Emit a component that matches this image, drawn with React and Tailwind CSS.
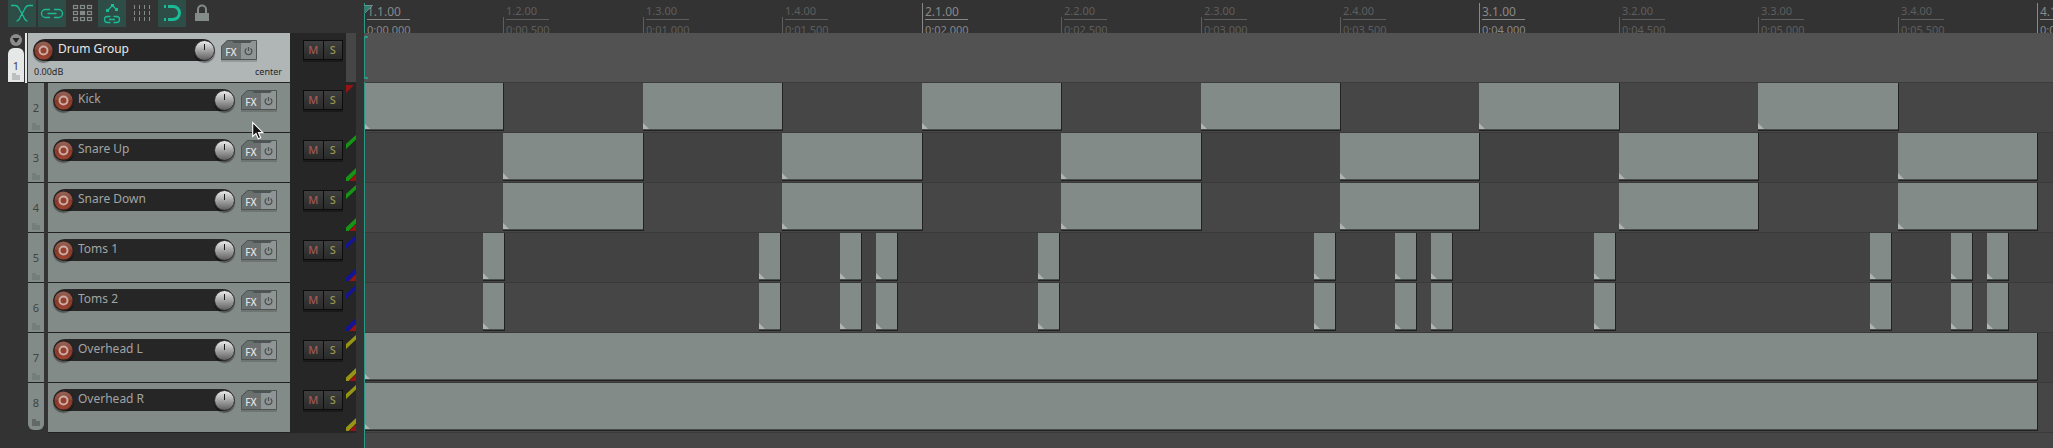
import React, { useState } from 'react';

const BEAT_WIDTH = 139.42;
const TOM_HITS = [119, 395, 476, 512, 674, 950, 1031, 1067, 1230, 1506, 1587, 1623];

const beatX = beat => Math.round(beat * BEAT_WIDTH);

function beats(list, length = 1) {
  return list.map(b => ({ left: beatX(b), width: beatX(b + length) - beatX(b) + 1 }));
}

const kicks = beats([0, 2, 4, 6, 8, 10]);
const snares = beats([1, 3, 5, 7, 9, 11]);
const toms = TOM_HITS.map(x => ({ left: x, width: 22 }));
const overheads = beats([0], 12);

const tracks = [
  { id: 2, name: 'Kick', routing: null, clips: kicks },
  { id: 3, name: 'Snare Up', routing: '#149614', clips: snares },
  { id: 4, name: 'Snare Down', routing: '#149614', clips: snares },
  { id: 5, name: 'Toms 1', routing: '#141496', clips: toms },
  { id: 6, name: 'Toms 2', routing: '#141496', clips: toms },
  { id: 7, name: 'Overhead L', routing: '#969614', clips: overheads },
  { id: 8, name: 'Overhead R', routing: '#969614', clips: overheads },
];

const marks = [
  ['1.1.00', '0:00.000'],
  ['1.2.00', '0:00.500'],
  ['1.3.00', '0:01.000'],
  ['1.4.00', '0:01.500'],
  ['2.1.00', '0:02.000'],
  ['2.2.00', '0:02.500'],
  ['2.3.00', '0:03.000'],
  ['2.4.00', '0:03.500'],
  ['3.1.00', '0:04.000'],
  ['3.2.00', '0:04.500'],
  ['3.3.00', '0:05.000'],
  ['3.4.00', '0:05.500'],
  ['4.1.00', '0:06.000'],
];

const gridCells = [5.5, 11.5, 17.5].flatMap(y => [5.5, 12.5, 19.5].map(x => [x, y]));

const tools = [
  {
    label: 'Auto crossfade',
    on: true,
    icon: <path d="M3 5.500h4c2.500 0 3.500 1.500 4.500 4l4 7c1 2.500 2 4.500 4 4.500M25 5.500h-4c-2.500 0-3.500 1.500-4.500 4l-4 7c-1 2.500-2 4.500-4 4.500" />,
  },
  {
    label: 'Item grouping',
    on: true,
    icon: <path d="M12 9.500H7.500a4 4 0 0 0 0 8H12M16 9.500h4.500a4 4 0 0 1 0 8H16M9.500 13.500h9" />,
  },
  {
    label: 'Ripple editing',
    icon: (
      <g strokeWidth="1.2">
        {gridCells.map(([x, y]) => (
          <rect key={`${x}-${y}`} x={x} y={y} width="4" height="3" fill={x === 12.5 && y === 11.5 ? 'currentColor' : 'none'} />
        ))}
      </g>
    ),
  },
  {
    label: 'Move envelopes',
    on: true,
    icon: (
      <>
        <path d="M12.500 16.500h-3a3 3 0 0 0 0 6h3M15.500 16.500h3a3 3 0 0 1 0 6h-3M11 19.500h6M9.500 10.500l5-5 4 4" />
        <path d="M8 9h3v3H8zM13 4h3v3h-3zM17 8h3v3h-3z" fill="currentColor" stroke="none" />
      </>
    ),
  },
  {
    label: 'Grid lines',
    icon: <path strokeWidth="1" strokeDasharray="4 2" d="M6.500 5v16M11.500 5v16M16.500 5v16M21.500 5v16" />,
  },
  {
    label: 'Snap',
    on: true,
    icon: (
      <>
        <path strokeWidth="3" d="M10 6.500h5a6.500 6.500 0 0 1 0 13h-5" />
        <path d="M6 5h2v3H6zM6 18h2v3H6z" fill="currentColor" stroke="none" />
      </>
    ),
  },
  {
    label: 'Lock',
    icon: (
      <>
        <path strokeWidth="2" d="M10 14V9.500a4 4 0 0 1 8 0V14" />
        <path d="M7 13h14v8H7z" fill="currentColor" stroke="none" />
      </>
    ),
  },
];

function Toolbar() {
  return (
    <div className="flex h-[33px] items-start gap-0.5 pl-2">
      {tools.map(tool => (
        <button
          key={tool.label}
          type="button"
          aria-label={tool.label}
          className={'h-[27px] w-7 ' + (tool.on ? 'bg-[#2f4d47] text-[#1abc98]' : 'text-[#848c8a]')}
        >
          <svg viewBox="0 0 28 27" className="block h-[27px] w-7" fill="none" stroke="currentColor" strokeWidth="1.3">
            {tool.icon}
          </svg>
        </button>
      ))}
    </div>
  );
}

function FolderIcon({ className }) {
  return (
    <svg viewBox="0 0 8 7" className={'h-[7px] w-2 ' + className} fill="currentColor">
      <path d="M0 0h4v2h4v5H0z" />
    </svg>
  );
}

function RecordButton({ name }) {
  return (
    <button type="button" aria-label={`Arm ${name}`} className="-ml-px size-[21px] shrink-0 rounded-full shadow-[0_2px_1px_#0006]">
      <svg viewBox="0 0 21 21" className="block size-[21px]">
        <defs>
          <linearGradient id="arm" x1="0" y1="0" x2="0" y2="1">
            <stop offset="0" stopColor="#96655a" />
            <stop offset="0.45" stopColor="#8c4a3a" />
            <stop offset="0.5" stopColor="#86382a" />
            <stop offset="1" stopColor="#a04632" />
          </linearGradient>
        </defs>
        <circle cx="10.500" cy="10.500" r="9.800" fill="url(#arm)" stroke="#2a2220" strokeWidth="1.400" />
        <circle cx="10.500" cy="10.500" r="4" fill="#94402f" stroke="#cfaca4" strokeWidth="2" />
      </svg>
    </button>
  );
}

function VolumeKnob({ name }) {
  return (
    <label className="relative -mr-px block size-[21px] shrink-0 rounded-full shadow-[0_2px_1px_#0006]">
      <input type="range" aria-label={`${name} volume`} className="absolute inset-0 size-full opacity-0" />
      <svg viewBox="0 0 21 21" className="block size-[21px]">
        <defs>
          <linearGradient id="knob" x1="0" y1="0" x2="0" y2="1">
            <stop offset="0" stopColor="#f0f0f0" />
            <stop offset="0.5" stopColor="#a4a4a4" />
            <stop offset="1" stopColor="#5c5c5c" />
          </linearGradient>
        </defs>
        <circle cx="10.500" cy="10.500" r="10" fill="url(#knob)" stroke="#262626" />
        <path d="M10.500 4v6" stroke="#1c1c1c" />
      </svg>
    </label>
  );
}

function FxButtons({ name }) {
  return (
    <div className="relative ml-[7px] flex h-5 w-9 shrink-0 shadow-[0_2px_0_#0000002a] [clip-path:polygon(0_6px,6px_0,100%_0,100%_110%,0_110%)]">
      <button type="button" aria-label={`${name} effects`} className="w-5 bg-[#6a706f] pt-0.5 text-[10px] leading-5 font-medium text-[#e4e4e4]">
        FX
      </button>
      <button type="button" aria-label={`Bypass ${name} effects`} className="w-4 bg-[#8e9594] text-[#4c5250]">
        <svg viewBox="0 0 16 20" className="block h-5 w-4" fill="none" stroke="currentColor" strokeWidth="1.300">
          <path d="M5.500 8.500a3.400 3.400 0 1 0 4 0M7.500 7v4" />
        </svg>
      </button>
      <svg viewBox="0 0 36 20" className="pointer-events-none absolute inset-0 h-5 w-9" fill="none" stroke="#4e5453">
        <path d="M.5 19.500V6.500l6-6h29v19z" />
        <path d="M11 1h20l-2 2H13z" fill="#4e5453" stroke="none" />
      </svg>
    </div>
  );
}

function MuteSolo({ name }) {
  return (
    <div className="mt-[7px] ml-[13px] flex h-5 w-10 divide-x divide-[#0c0c0c] border border-[#0c0c0c] bg-linear-to-b from-[#3e3e3e] to-[#2a2a2a] text-[11px] leading-[18px] font-medium shadow-[0_2px_0_#1a1a1a]">
      <button type="button" aria-label={`Mute ${name}`} className="flex-1 text-[#a25a52]">M</button>
      <button type="button" aria-label={`Solo ${name}`} className="flex-1 text-[#97954e]">S</button>
    </div>
  );
}

function Meter({ folder, routing }) {
  if (folder) {
    return <div className="ml-auto h-[49px] w-2.5 bg-[#464646]" />;
  }
  return (
    <svg viewBox="0 0 10 50" className="ml-auto h-[50px] w-2.5">
      {routing ? (
        <>
          <path d="M0 11l10-9v4.500L0 16zM0 44.500L10 35v5.500L2.500 48H0z" fill={routing} />
          <path d="M3 48l7-7v7z" fill="#961414" />
        </>
      ) : (
        <path d="M0 2h8l-8 8z" fill="#961414" />
      )}
    </svg>
  );
}

function TrackPanel({ name, folder, routing }) {
  return (
    <>
      <div className={'min-w-0 flex-1 border-b border-[#222] pt-1.5 ' + (folder ? 'bg-[#b0b6b6]' : 'bg-[#838b89]')}>
        <div className="flex items-center pl-1.5">
          <div className="flex h-[22px] w-[180px] items-center justify-between rounded-full bg-[#262626]">
            <RecordButton name={name} />
            <input
              type="text"
              aria-label="Track name"
              defaultValue={name}
              className={'h-5 min-w-0 flex-1 bg-transparent px-1 pb-0.5 text-[12px] leading-5 outline-none ' + (folder ? 'text-[#e8e8e8]' : 'text-[#a2a4a4]')}
            />
            <VolumeKnob name={name} />
          </div>
          <FxButtons name={name} />
        </div>
        {folder && (
          <div className="flex justify-between pt-[5px] pr-2 pl-1.5 text-[9px] leading-3 text-[#262626]">
            <span>0.00dB</span>
            <span>center</span>
          </div>
        )}
      </div>
      <div className="flex h-[50px] w-[66px] shrink-0 bg-[#262626]">
        <MuteSolo name={name} />
        <Meter folder={folder} routing={routing} />
      </div>
    </>
  );
}

function FolderTrack() {
  const [open, setOpen] = useState(true);

  return (
    <div className="flex h-[50px] pl-2">
      <div className="flex w-4 flex-col items-center">
        <button type="button" aria-label="Collapse folder" aria-expanded={open} onClick={() => setOpen(!open)} className="mt-px">
          <svg viewBox="0 0 12 12" className="block size-3">
            <circle cx="6" cy="6" r="6" fill="#8c8c8c" />
            <path d="M2.500 4h7L6 9z" fill="#262626" />
          </svg>
        </button>
        <div className="mt-0.5 flex w-full flex-1 flex-col items-center justify-end rounded-t-md border-b border-[#222] bg-[#e6e8e8] pb-0.5 text-[11px] leading-[15px] text-[#444]">
          1
          <FolderIcon className="text-[#bcc0c0]" />
        </div>
      </div>
      <div className="mr-px ml-px w-0.5 bg-[#e6e8e8]" />
      <TrackPanel name="Drum Group" folder />
    </div>
  );
}

function Track({ track, last }) {
  return (
    <div className="flex h-[50px] pl-7">
      <div
        className={
          'mr-1 flex w-4 shrink-0 flex-col items-center justify-end bg-[#838b89] text-[11px] leading-4 text-[#3e4442] ' +
          (last ? 'mb-[3px] gap-2 rounded-b-md pb-1' : 'gap-[7px] border-b border-[#222] pb-0.5')
        }
      >
        {track.id}
        <FolderIcon className={last ? 'text-[#636967]' : 'text-[#767e7c]'} />
      </div>
      <TrackPanel name={track.name} routing={track.routing} />
    </div>
  );
}

function Ruler() {
  return (
    <div className="relative h-[33px] overflow-hidden">
      {marks.map(([bar, time], i) => {
        const major = i % 4 === 0;
        return (
          <div
            key={bar}
            style={{ left: beatX(i) }}
            className={'absolute top-0 h-[33px] whitespace-nowrap pl-[3px] ' + (major ? 'text-[#888]' : 'text-[#5e5e5e]')}
          >
            <div className={'absolute bottom-0 left-0 w-px bg-current ' + (major ? 'top-[3px]' : 'top-[17px]')} />
            <div className={'h-5 w-[43px] border-b border-current ' + (major ? 'pt-1 text-[12px] leading-4' : 'pt-[3px] text-[11px] leading-4')}>{bar}</div>
            <div className="pt-0.5 text-[11px] leading-4">{time}</div>
          </div>
        );
      })}
    </div>
  );
}

function Clip({ clip }) {
  return (
    <div
      style={{ left: clip.left, width: clip.width }}
      className="absolute top-0 h-12 border-r border-b border-[#222] bg-[#838b89]"
    >
      <div className="flex h-full items-end border-b border-[#484e4c]">
        <svg viewBox="0 0 6 6" className="block size-1.5">
          <path d="M0 0l6 6H0z" fill="#b0b4b4" />
        </svg>
      </div>
    </div>
  );
}

function Timeline() {
  return (
    <div className="relative flex min-w-0 flex-1 flex-col overflow-hidden">
      <Ruler />
      <div className="h-[50px] border-b border-[#3c3c3c] bg-[#525252]" />
      {tracks.map((track, i) => (
        <div
          key={track.id}
          className={'relative h-[50px] border-b border-[#3a3a3a] ' + (i % 2 === 0 ? 'bg-[#464646]' : 'bg-[#424242]')}
        >
          {track.clips.map(clip => (
            <Clip key={clip.left} clip={clip} />
          ))}
        </div>
      ))}
      <div className="flex-1 bg-[#464646]" />

      {/* Edit cursor */}
      <div className="absolute top-[3px] left-0 h-[30px] w-px bg-[#2a9a88]" />
      <div className="absolute top-9 left-0 h-[43px] w-1 border-y-2 border-l border-[#2a9a88]" />
      <div className="absolute top-[82px] bottom-0 left-0 w-px bg-[#2a9a88]" />
      <svg viewBox="0 0 9 9" className="absolute top-[5px] left-0 size-[9px]">
        <path d="M0 0h9L0 9z" fill="#2f7f70" />
        <path d="M0 .5h8.500L1 8" fill="none" stroke="#8a9a96" strokeWidth=".7" />
      </svg>
    </div>
  );
}

export default function App() {
  return (
    <div className="relative flex min-h-screen overflow-hidden bg-[#333] font-['Noto_Sans','Open_Sans',sans-serif]">
      <div className="w-[364px] shrink-0 pr-2">
        <Toolbar />
        <FolderTrack />
        {tracks.map((track, i) => (
          <Track key={track.id} track={track} last={i === tracks.length - 1} />
        ))}
      </div>
      <Timeline />

      {/* Mouse pointer */}
      <svg viewBox="0 0 12 19" className="pointer-events-none absolute top-[121px] left-[252px] h-[19px] w-3">
        <path d="M.7 1.500v14l3.300-3 2.300 5.300 2.400-1-2.300-5.200h4.500z" fill="#111" stroke="#fff" strokeWidth="1.100" />
      </svg>
    </div>
  );
}
